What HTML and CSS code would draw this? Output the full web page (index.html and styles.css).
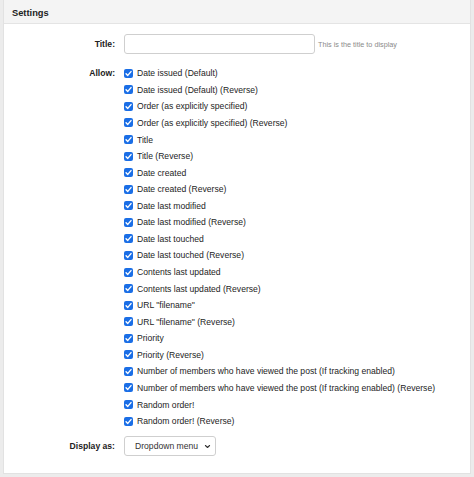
FILE: index.html
```html
<!DOCTYPE html>
<html>
<head>
<meta charset="utf-8">
<link rel="stylesheet" href="styles.css">
</head>
<body>
<div class="card">
  <div class="card-head">Settings</div>
  <div class="card-body">
    <div class="field field-title">
      <div class="label">Title:</div>
      <div class="control inline">
        <span class="text-input"></span>
        <span class="help">This is the title to display</span>
      </div>
    </div>
    <div class="field field-allow">
      <div class="label">Allow:</div>
      <div class="control">
        <ul class="checks">
          <li><span class="cb"><svg viewBox="0 0 10 10"><path d="M2.3 5.2 4.2 7.1 7.8 2.9"/></svg></span>Date issued (Default)</li>
          <li><span class="cb"><svg viewBox="0 0 10 10"><path d="M2.3 5.2 4.2 7.1 7.8 2.9"/></svg></span>Date issued (Default) (Reverse)</li>
          <li><span class="cb"><svg viewBox="0 0 10 10"><path d="M2.3 5.2 4.2 7.1 7.8 2.9"/></svg></span>Order (as explicitly specified)</li>
          <li><span class="cb"><svg viewBox="0 0 10 10"><path d="M2.3 5.2 4.2 7.1 7.8 2.9"/></svg></span>Order (as explicitly specified) (Reverse)</li>
          <li><span class="cb"><svg viewBox="0 0 10 10"><path d="M2.3 5.2 4.2 7.1 7.8 2.9"/></svg></span>Title</li>
          <li><span class="cb"><svg viewBox="0 0 10 10"><path d="M2.3 5.2 4.2 7.1 7.8 2.9"/></svg></span>Title (Reverse)</li>
          <li><span class="cb"><svg viewBox="0 0 10 10"><path d="M2.3 5.2 4.2 7.1 7.8 2.9"/></svg></span>Date created</li>
          <li><span class="cb"><svg viewBox="0 0 10 10"><path d="M2.3 5.2 4.2 7.1 7.8 2.9"/></svg></span>Date created (Reverse)</li>
          <li><span class="cb"><svg viewBox="0 0 10 10"><path d="M2.3 5.2 4.2 7.1 7.8 2.9"/></svg></span>Date last modified</li>
          <li><span class="cb"><svg viewBox="0 0 10 10"><path d="M2.3 5.2 4.2 7.1 7.8 2.9"/></svg></span>Date last modified (Reverse)</li>
          <li><span class="cb"><svg viewBox="0 0 10 10"><path d="M2.3 5.2 4.2 7.1 7.8 2.9"/></svg></span>Date last touched</li>
          <li><span class="cb"><svg viewBox="0 0 10 10"><path d="M2.3 5.2 4.2 7.1 7.8 2.9"/></svg></span>Date last touched (Reverse)</li>
          <li><span class="cb"><svg viewBox="0 0 10 10"><path d="M2.3 5.2 4.2 7.1 7.8 2.9"/></svg></span>Contents last updated</li>
          <li><span class="cb"><svg viewBox="0 0 10 10"><path d="M2.3 5.2 4.2 7.1 7.8 2.9"/></svg></span>Contents last updated (Reverse)</li>
          <li><span class="cb"><svg viewBox="0 0 10 10"><path d="M2.3 5.2 4.2 7.1 7.8 2.9"/></svg></span>URL "filename"</li>
          <li><span class="cb"><svg viewBox="0 0 10 10"><path d="M2.3 5.2 4.2 7.1 7.8 2.9"/></svg></span>URL "filename" (Reverse)</li>
          <li><span class="cb"><svg viewBox="0 0 10 10"><path d="M2.3 5.2 4.2 7.1 7.8 2.9"/></svg></span>Priority</li>
          <li><span class="cb"><svg viewBox="0 0 10 10"><path d="M2.3 5.2 4.2 7.1 7.8 2.9"/></svg></span>Priority (Reverse)</li>
          <li><span class="cb"><svg viewBox="0 0 10 10"><path d="M2.3 5.2 4.2 7.1 7.8 2.9"/></svg></span>Number of members who have viewed the post (If tracking enabled)</li>
          <li><span class="cb"><svg viewBox="0 0 10 10"><path d="M2.3 5.2 4.2 7.1 7.8 2.9"/></svg></span>Number of members who have viewed the post (If tracking enabled) (Reverse)</li>
          <li><span class="cb"><svg viewBox="0 0 10 10"><path d="M2.3 5.2 4.2 7.1 7.8 2.9"/></svg></span>Random order!</li>
          <li><span class="cb"><svg viewBox="0 0 10 10"><path d="M2.3 5.2 4.2 7.1 7.8 2.9"/></svg></span>Random order! (Reverse)</li>
        </ul>
      </div>
    </div>
    <div class="field field-display">
      <div class="label">Display as:</div>
      <div class="control">
        <span class="select">Dropdown menu<svg class="chev" viewBox="0 0 8 6"><path d="M1.5 1.8 4 4.2 6.5 1.8"/></svg></span>
      </div>
    </div>
  </div>
</div>
</body>
</html>
```
FILE: styles.css
```css
html, body {
  margin: 0;
  padding: 0;
  background: #ececec;
}
body {
  font-family: "Liberation Sans", Arial, sans-serif;
  font-size: 8.6px;
  color: #1d1d1d;
  padding: 0 3px 3px 3px;
  height: 477px;
  box-sizing: border-box;
}
.card {
  background: #fff;
  border: 1px solid #e2e2e2;
  border-top: none;
  height: 474px;
  box-sizing: border-box;
}
.card-head {
  height: 23px;
  background: #f4f4f4;
  border-bottom: 1px solid #e4e4e4;
  font-weight: bold;
  font-size: 9.3px;
  color: #222;
  display: flex;
  align-items: center;
  padding: 2px 0 0 8px;
  box-sizing: border-box;
  height: 24px;
}
.card-body {
  padding-top: 10px;
}
.field {
  display: grid;
  grid-template-columns: 111px 1fr;
  column-gap: 9px;
}
.label {
  text-align: right;
  font-weight: bold;
  color: #222;
}
.field-title {
  align-items: center;
}
.inline {
  display: flex;
  align-items: center;
  gap: 3px;
}
.text-input {
  display: block;
  width: 191px;
  height: 20px;
  border: 1px solid #cfcfcf;
  border-radius: 3px;
  box-sizing: border-box;
  background: #fff;
}
.help {
  font-size: 7.25px;
  color: #8a8a8a;
}
.field-allow {
  margin-top: 11px;
}
.field-allow .label {
  line-height: 16.57px;
}
.checks {
  list-style: none;
  margin: 0;
  padding: 0;
}
.checks li {
  height: 16.57px;
  display: flex;
  align-items: center;
  gap: 4px;
  white-space: nowrap;
}
.cb {
  width: 9px;
  height: 9px;
  border-radius: 2px;
  background: #1a6ee6;
  display: inline-flex;
  flex: none;
}
.cb svg {
  width: 9px;
  height: 9px;
  fill: none;
  stroke: #fff;
  stroke-width: 1.6;
  stroke-linecap: round;
  stroke-linejoin: round;
}
.field-display {
  margin-top: 7px;
  align-items: center;
}
.select {
  display: inline-flex;
  align-items: center;
  justify-content: space-between;
  width: 92px;
  height: 20px;
  box-sizing: border-box;
  border: 1px solid #cfcfcf;
  border-radius: 3px;
  padding: 0 4px 0 10px;
  color: #333;
}
.chev {
  width: 7px;
  height: 5px;
  fill: none;
  stroke: #333;
  stroke-width: 1.3;
  stroke-linecap: round;
  stroke-linejoin: round;
}
```
